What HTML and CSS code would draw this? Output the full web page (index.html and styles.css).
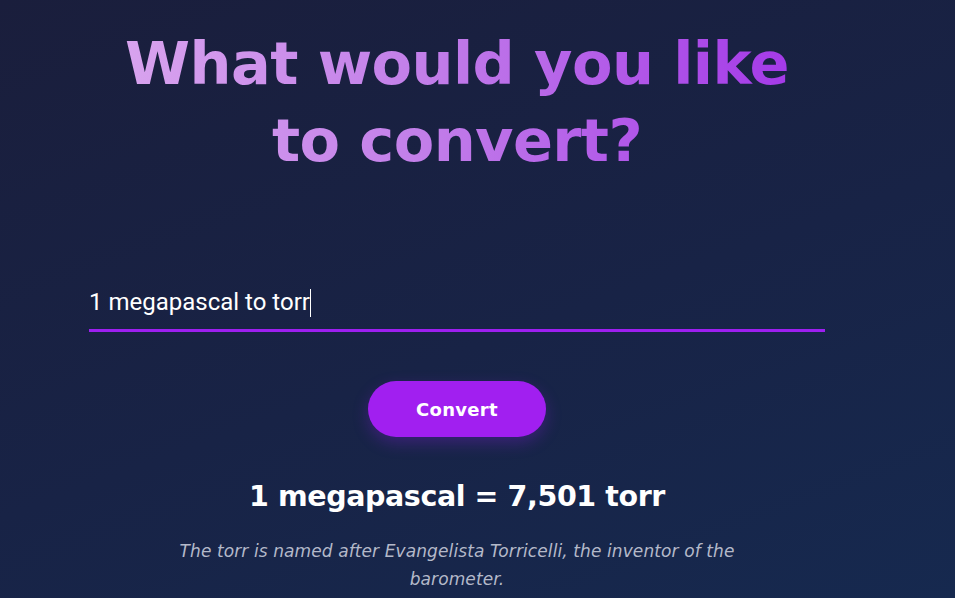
FILE: index.html
```html
<!DOCTYPE html>
<html lang="en">
<head>
<meta charset="utf-8">
<title>Converter</title>
<link rel="stylesheet" href="styles.css">
</head>
<body>
<main class="page">
  <h1 class="title">What would you like<br>to convert?</h1>
  <div class="field">
    <span class="field-text">1 megapascal to torr</span><span class="caret"></span>
  </div>
  <button class="convert" type="button">Convert</button>
  <p class="result">1 megapascal = 7,501 torr</p>
  <p class="note">The torr is named after Evangelista Torricelli, the inventor of the barometer.</p>
</main>
</body>
</html>
```
FILE: styles.css
```css
html, body {
  margin: 0;
  height: 100%;
}
body {
  background: linear-gradient(160deg, #1a1e3c 0%, #182346 55%, #16294f 100%);
  overflow: hidden;
  font-family: "DejaVu Sans", sans-serif;
}
.page {
  width: 914px;
  display: flex;
  flex-direction: column;
  align-items: center;
}
.title {
  margin: 25px 0 0;
  font-size: 59px;
  line-height: 77px;
  font-weight: 700;
  text-align: center;
  letter-spacing: -0.6px;
  background: linear-gradient(90deg, #d8a3ee 0%, #c27ee9 45%, #a43ae8 100%);
  -webkit-background-clip: text;
  background-clip: text;
  color: transparent;
}
.field {
  margin-top: 106px;
  width: 736px;
  height: 41px;
  padding-top: 3px;
  box-sizing: content-box;
  border-bottom: 3px solid #9d1ff0;
  display: flex;
  align-items: flex-start;
  font-family: Roboto, sans-serif;
  font-size: 24px;
  line-height: 28px;
  color: #ffffff;
}
.caret {
  display: inline-block;
  width: 1px;
  height: 28px;
  margin-top: 1px;
  background: #ffffff;
}
.convert {
  margin-top: 49px;
  width: 178px;
  height: 56px;
  border: none;
  border-radius: 28px;
  background: #a11ff0;
  color: #ffffff;
  font-family: "DejaVu Sans", sans-serif;
  font-weight: 700;
  font-size: 18px;
  letter-spacing: 0.3px;
  box-shadow: 0 6px 16px rgba(140, 30, 230, 0.3);
}
.result {
  margin: 40px 0 0;
  font-size: 28.5px;
  line-height: 40px;
  font-weight: 700;
  color: #ffffff;
  letter-spacing: -0.4px;
}
.note {
  margin: 20px 0 0;
  width: 600px;
  text-align: center;
  font-style: italic;
  font-size: 17px;
  line-height: 28px;
  color: #b4b9c9;
  letter-spacing: 0.1px;
}
```
